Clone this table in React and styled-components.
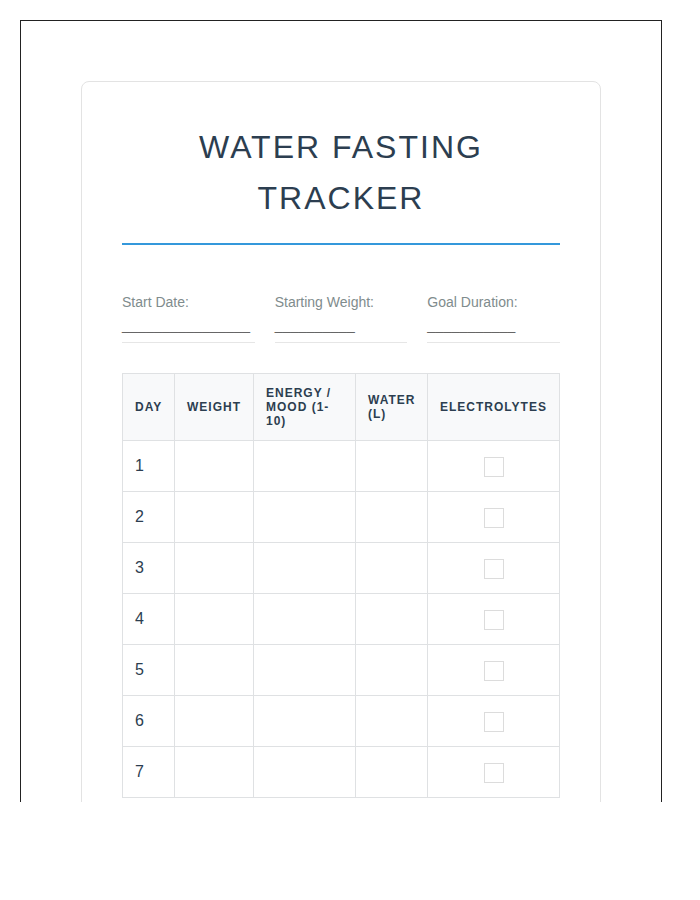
import React from "react";
import styled, { createGlobalStyle } from "styled-components";

const GlobalStyle = createGlobalStyle`
  html, body {
    margin: 0;
    padding: 0;
    background: #fff;
  }

  body {
    font-family: "Liberation Sans", Arial, sans-serif;
    color: #2c3e50;
    line-height: 1.6;
  }
`;

const fields = [
  { label: "Start Date:", blanks: 16 },
  { label: "Starting Weight:", blanks: 10 },
  { label: "Goal Duration:", blanks: 11 },
];

const columns = [
  { title: "Day", width: 52 },
  { title: "Weight", width: 79 },
  { title: "Energy / Mood (1-10)", width: 102 },
  { title: "Water (L)", width: 72 },
  { title: "Electrolytes", width: 132 },
];

const days = [1, 2, 3, 4, 5, 6, 7];

function App() {
  return (
    <>
      <GlobalStyle />
      <Page>
        <Frame>
          <Card>
            <Title>Water Fasting Tracker</Title>

            <Fields>
              {fields.map((f) => (
                <Field key={f.label}>
                  <Label>{f.label}</Label>
                  <Blank>{"_".repeat(f.blanks)}</Blank>
                </Field>
              ))}
            </Fields>

            <Table>
              <colgroup>
                {columns.map((c) => (
                  <col key={c.title} style={{ width: c.width }} />
                ))}
              </colgroup>
              <thead>
                <tr>
                  {columns.map((c) => (
                    <Th key={c.title}>{c.title}</Th>
                  ))}
                </tr>
              </thead>
              <tbody>
                {days.map((d) => (
                  <tr key={d}>
                    <Td>{d}</Td>
                    <Td />
                    <Td />
                    <Td />
                    <Td $center>
                      <Check />
                    </Td>
                  </tr>
                ))}
              </tbody>
            </Table>
          </Card>
        </Frame>
      </Page>
    </>
  );
}

export default App;

const Page = styled.div`
  box-sizing: border-box;
  height: 802px;
  overflow: hidden;
  padding: 20px 0 0 20px;
`;

const Frame = styled.div`
  box-sizing: border-box;
  width: 642px;
  min-height: 900px;
  border: 1px solid #222;
  padding: 60px 59px 60px 60px;
`;

const Card = styled.div`
  box-sizing: border-box;
  width: 520px;
  background: #fff;
  border: 1px solid #e3e3e3;
  border-radius: 8px;
  padding: 40px;
`;

const Title = styled.h1`
  margin: 0 0 46px;
  padding-bottom: 19px;
  border-bottom: 2px solid #3498db;
  font-size: 32px;
  font-weight: 400;
  line-height: 1.6;
  letter-spacing: 2px;
  text-transform: uppercase;
  text-align: center;
  color: #2c3e50;
`;

const Fields = styled.div`
  display: grid;
  grid-template-columns: repeat(3, 1fr);
  column-gap: 20px;
  margin-bottom: 30px;
`;

const Field = styled.div`
  display: flex;
  flex-direction: column;
  padding-bottom: 5px;
  border-bottom: 1px solid #e6e6e6;
`;

const Label = styled.span`
  font-size: 14px;
  color: #7f8c8d;
`;

const Blank = styled.span`
  font-size: 14.4px;
  color: #666;
  white-space: nowrap;
`;

const Table = styled.table`
  width: 437px;
  table-layout: fixed;
  border-collapse: collapse;
`;

const Th = styled.th`
  padding: 12px;
  background: #f8f9fa;
  border: 1px solid #dfe1e3;
  font-size: 12px;
  font-weight: 700;
  line-height: 14px;
  letter-spacing: 1px;
  text-transform: uppercase;
  text-align: left;
  color: #2c3e50;
`;

const Td = styled.td`
  padding: 12px;
  border: 1px solid #dfe1e3;
  font-size: 16px;
  line-height: 1.6;
  height: 26px;
  color: #2c3e50;
  text-align: ${(p) => (p.$center ? "center" : "left")};
  vertical-align: middle;
`;

const Check = styled.div`
  display: inline-block;
  box-sizing: border-box;
  width: 20px;
  height: 20px;
  border: 1px solid #dcdcdc;
  vertical-align: middle;
`;
